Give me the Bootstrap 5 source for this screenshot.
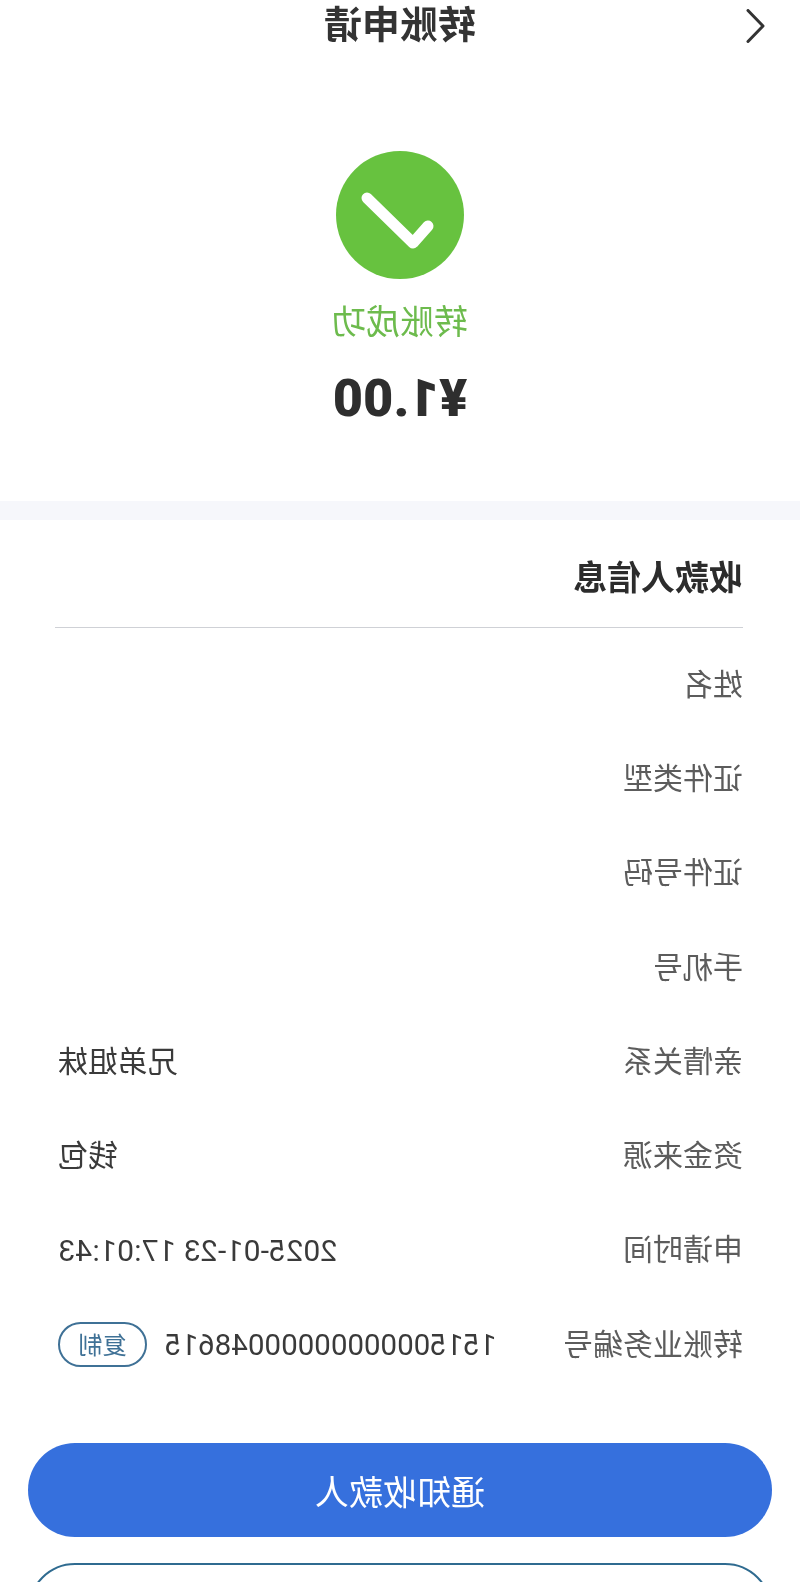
<!DOCTYPE html>
<html lang="zh-CN">
<head>
<meta charset="utf-8">
<title>转账申请</title>
<link href="https://cdn.jsdelivr.net/npm/bootstrap@5.3.0/dist/css/bootstrap.min.css" rel="stylesheet">
<style>
html,body{margin:0;background:#fff;}
body{font-family:"Noto Sans CJK SC","Liberation Sans",sans-serif;overflow:hidden;height:1582px;}
.mirror-page{width:800px;height:1582px;overflow:hidden;transform:scaleX(-1);background:#fff;filter:blur(.4px);}
.top-bar{height:44px;padding:0 35px;}
.top-title{font-size:38px;font-weight:700;color:#333;line-height:44px;}
.top-side{width:19px;}
.chev{margin-top:8px;}
.hero{height:457px;padding-top:107px;}
.ok-circle{width:128px;height:128px;background:#67c23f;border-radius:50%;}
.ok-text{font-size:34px;line-height:42px;color:#6dbb4d;margin-top:20px;}
.amount{font-family:Roboto,"Liberation Sans",sans-serif;font-size:52px;font-weight:900;line-height:56px;color:#2e2e2e;margin-top:30px;}
.band{height:19px;background:#f6f7fb;}
.info{padding:0 55px 0 57px;}
.info-head{height:108px;padding-top:31px;border-bottom:1px solid #cfd1d6;font-size:34px;line-height:50px;font-weight:700;color:#2c2c2c;}
.info-list{padding:7px 3px 0 0;}
.info-row{height:94.3px;font-size:30px;color:#3a3a3a;}
.info-label{color:#5c5c5c;}
.num{font-family:Roboto,"Liberation Sans",sans-serif;font-size:29.500px;padding-top:5px;}
.num-wide{font-size:30px;letter-spacing:.25px;}
.id-group{gap:18px;}
.copy-pill{width:89px;height:45px;margin-top:4px;border:2px solid #3f7196;border-radius:23px;color:#3f7196;font-size:24px;line-height:1;background:#fff;padding:0;}
.main-actions{padding:54px 28px 0;}
.pill-btn{height:94px;border-radius:47px;font-size:34px;width:100%;}
.pill-btn.btn-fill{background:#3670dd;border:0;color:#fff;}
.pill-btn.btn-line{background:#fff;border:2px solid #2f6b90;margin-top:26px;}
svg{display:block;}
</style>
</head>
<body>
<div class="mirror-page">
  <div class="top-bar d-flex align-items-center justify-content-between">
    <svg class="top-side chev" width="19" height="34" viewBox="0 0 19 34"><path d="M17 1.500 2 17l15 15.500" fill="none" stroke="#333" stroke-width="3" stroke-linecap="round" stroke-linejoin="round"/></svg>
    <div class="top-title">转账申请</div>
    <div class="top-side"></div>
  </div>
  <div class="hero d-flex flex-column align-items-center">
    <div class="ok-circle d-flex align-items-center justify-content-center">
      <svg width="128" height="128" viewBox="0 0 128 128"><path d="M31 47 77 92 92 75" transform="translate(128 0) scale(-1 1)" fill="none" stroke="#fff" stroke-width="11" stroke-linecap="round" stroke-linejoin="round"/></svg>
    </div>
    <div class="ok-text">转账成功</div>
    <div class="amount">¥1.00</div>
  </div>
  <div class="band"></div>
  <div class="info">
    <div class="info-head">收款人信息</div>
    <div class="info-list">
      <div class="info-row d-flex align-items-center justify-content-between"><span class="info-label">姓名</span></div>
      <div class="info-row d-flex align-items-center justify-content-between"><span class="info-label">证件类型</span></div>
      <div class="info-row d-flex align-items-center justify-content-between"><span class="info-label">证件号码</span></div>
      <div class="info-row d-flex align-items-center justify-content-between"><span class="info-label">手机号</span></div>
      <div class="info-row d-flex align-items-center justify-content-between"><span class="info-label">亲情关系</span><span>兄弟姐妹</span></div>
      <div class="info-row d-flex align-items-center justify-content-between"><span class="info-label">资金来源</span><span>钱包</span></div>
      <div class="info-row d-flex align-items-center justify-content-between"><span class="info-label">申请时间</span><span class="num num-wide">2025-01-23 17:01:43</span></div>
      <div class="info-row d-flex align-items-center justify-content-between"><span class="info-label">转账业务编号</span><span class="d-flex align-items-center id-group"><span class="num">15150000000000048615</span><button type="button" class="copy-pill btn">复制</button></span></div>
    </div>
  </div>
  <div class="main-actions">
    <button type="button" class="btn pill-btn btn-fill d-block">通知收款人</button>
    <button type="button" class="btn pill-btn btn-line d-block" aria-label="button"></button>
  </div>
</div>
<script src="https://cdn.jsdelivr.net/npm/bootstrap@5.3.0/dist/js/bootstrap.bundle.min.js"></script>
</body>
</html>
